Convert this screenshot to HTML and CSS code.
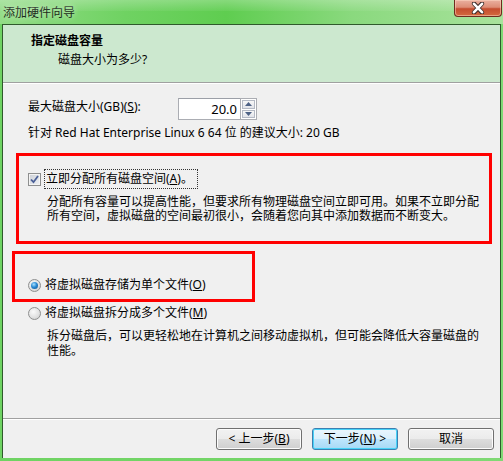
FILE: index.html
```html
<!DOCTYPE html>
<html lang="zh-CN">
<head>
<meta charset="utf-8">
<title>添加硬件向导</title>
<link rel="stylesheet" href="styles.css">
</head>
<body>
<div class="frame">
  <div class="titlebar">
    <span class="title">添加硬件向导</span>
    <div class="close"><svg width="20" height="12" viewBox="0 0 20 12"><path d="M6 1.5 L14 10.5 M14 1.5 L6 10.5" stroke="#3a2a28" stroke-width="4.2" fill="none" stroke-linecap="round"/><path d="M6 1.8 L14 10.2 M14 1.8 L6 10.2" stroke="#ffffff" stroke-width="2.6" fill="none" stroke-linecap="round"/></svg></div>
  </div>
  <div class="client">
    <div class="header">
      <div class="h-title">指定磁盘容量</div>
      <div class="h-sub">磁盘大小为多少?</div>
    </div>
    <div class="content">
      <div class="size-row">
        <span class="size-label">最大磁盘大小(GB)(<u>S</u>):</span>
        <div class="spin">
          <div class="spin-input">20.0</div>
          <div class="spin-btns">
            <div class="spin-btn"><svg width="7" height="4" viewBox="0 0 7 4"><path d="M0 4 L3.5 0 L7 4 Z" fill="#4d6185"/></svg></div>
            <div class="spin-btn"><svg width="7" height="4" viewBox="0 0 7 4"><path d="M0 0 L3.5 4 L7 0 Z" fill="#4d6185"/></svg></div>
          </div>
        </div>
      </div>
      <div class="hint">针对 Red Hat Enterprise Linux 6 64 位 的建议大小: 20 GB</div>
      <div class="opt opt-check">
        <span class="checkbox"><svg width="9" height="9" viewBox="0 0 9 9"><path d="M1 4.5 L3.5 7.2 L8 1" stroke="#4a5f97" stroke-width="1.8" fill="none"/></svg></span>
        <span class="focus-label">立即分配所有磁盘空间(<u>A</u>)。</span>
      </div>
      <div class="desc desc1">
        <div class="line">分配所有容量可以提高性能，但要求所有物理磁盘空间立即可用。如果不立即分配</div>
        <div class="line">所有空间，虚拟磁盘的空间最初很小，会随着您向其中添加数据而不断变大。</div>
      </div>
      <div class="opt opt-r1">
        <span class="radio checked"><span class="dot"></span></span>
        <span class="label">将虚拟磁盘存储为单个文件(<u>O</u>)</span>
      </div>
      <div class="opt opt-r2">
        <span class="radio"></span>
        <span class="label">将虚拟磁盘拆分成多个文件(<u>M</u>)</span>
      </div>
      <div class="desc desc2">
        <div class="line">拆分磁盘后，可以更轻松地在计算机之间移动虚拟机，但可能会降低大容量磁盘的</div>
        <div class="line">性能。</div>
      </div>
    </div>
    <div class="footer">
      <button class="btn">&lt; 上一步(<u>B</u>)</button>
      <button class="btn btn-default">下一步(<u>N</u>) &gt;</button>
      <button class="btn">取消</button>
    </div>
  </div>
</div>
<div class="mark mark1"></div>
<div class="mark mark2"></div>
</body>
</html>
```
FILE: styles.css
```css
* { box-sizing: border-box; }
html, body { margin: 0; padding: 0; }
body {
  width: 503px;
  height: 461px;
  overflow: hidden;
  position: relative;
  font-family: "Segoe UI", "Noto Sans", "Noto Sans CJK SC", sans-serif;
  font-size: 12px;
  color: #000;
}
u { text-decoration: underline; text-underline-offset: 1px; }
.frame {
  width: 503px;
  height: 461px;
  background: linear-gradient(90deg, #6fd363 0%, #74d568 50%, #80d975 100%);
  display: flex;
  flex-direction: column;
}
.titlebar {
  height: 24px;
  position: relative;
  background: linear-gradient(90deg, #92dc86 0%, #6fd262 25%, #5fcd50 45%, #8ad97e 70%, #a8e29c 100%);
  display: flex;
  align-items: center;
}
.titlebar::after {
  content: "";
  position: absolute;
  left: 0; right: 0; top: 0; height: 11px;
  background: linear-gradient(to bottom, rgba(255,255,255,0.25), rgba(255,255,255,0.05));
  pointer-events: none;
}
.title {
  margin-left: 3px;
  margin-top: 2px;
  line-height: 16px;
  color: #1c2c1a;
  text-shadow: 0 0 6px rgba(255,255,255,0.7);
}
.close {
  position: absolute;
  left: 454px;
  top: 0;
  width: 48px;
  height: 17px;
  border: 1px solid #6e2b1e;
  border-top: none;
  border-radius: 0 0 4px 4px;
  background: linear-gradient(to bottom, #eab0a0 0%, #dd8d76 45%, #c54d2f 55%, #d36a3e 100%);
  box-shadow: inset 0 0 0 1px rgba(255,220,200,0.5);
  display: flex;
  align-items: center;
  justify-content: center;
  z-index: 2;
}
.client {
  margin: 0 2px 3px 2px;
  flex: 1;
  border: 1px solid #2f5a2c;
  border-bottom: none;
  background: #f0f0f0;
  display: flex;
  flex-direction: column;
}
.header {
  height: 58px;
  background: #cce8cf;
  border-bottom: 1px solid #a0a0a0;
  box-shadow: 0 1px 0 #ffffff;
  margin-bottom: 1px;
  padding: 8px 0 0 28px;
}
.h-title {
  font-weight: bold;
  line-height: 16px;
}
.h-sub {
  margin-top: 3px;
  margin-left: 27px;
  line-height: 16px;
}
.content {
  flex: 1;
  padding: 0 0 0 25px;
}
.size-row {
  margin-top: 14px;
  height: 22px;
  display: flex;
  align-items: flex-start;
}
.size-label {
  line-height: 16px;
  margin-top: 1px;
  width: 150px;
}
.spin {
  display: flex;
  height: 22px;
}
.spin-input {
  width: 62px;
  height: 22px;
  background: #fff;
  border: 1px solid #abadb3;
  border-top-color: #9b9fa7;
  border-right: none;
  text-align: right;
  padding: 0 3px 0 0;
  line-height: 20px;
  font-size: 13px;
}
.spin-btns {
  width: 17px;
  height: 22px;
  display: flex;
  flex-direction: column;
  border: 1px solid #abadb3;
  background: #fff;
  padding: 1px;
  gap: 1px;
}
.spin-btn {
  flex: 1;
  border: 1px solid #b4b9c4;
  background: linear-gradient(to bottom, #f7f7f7, #e2e4ea);
  display: flex;
  align-items: center;
  justify-content: center;
}
.hint {
  margin-top: 5px;
  line-height: 16px;
}
.opt {
  display: flex;
  align-items: center;
  height: 20px;
}
.opt-check { margin-top: 28px; }
.checkbox {
  width: 13px;
  height: 13px;
  border: 1px solid #8e8f8f;
  background: linear-gradient(135deg, #cbcfd5 0%, #f0f2f5 100%);
  box-shadow: inset 0 0 0 1px #f4f4f4;
  display: flex;
  align-items: center;
  justify-content: center;
  margin-right: 3px;
}
.focus-label {
  border: 1px dotted #333;
  padding: 1px 4px 1px 1px;
  line-height: 16px;
}
.desc {
  padding-left: 19px;
  white-space: nowrap;
}
.desc .line {
  height: 15px;
  line-height: 15px;
}
.desc1 { margin-top: 6px; }
.desc1 .line { height: 14px; line-height: 14px; }
.opt-r1 { margin-top: 52px; }
.opt-r2 { margin-top: 8px; }
.desc2 { margin-top: 5px; }
.radio {
  width: 13px;
  height: 13px;
  border-radius: 50%;
  border: 1px solid #8e8f8f;
  background: radial-gradient(circle at 40% 35%, #fafafa 0%, #e2e2e2 55%, #c8c8c8 100%);
  display: flex;
  align-items: center;
  justify-content: center;
  margin-right: 4px;
}
.radio .dot {
  width: 7px;
  height: 7px;
  border-radius: 50%;
  background: radial-gradient(circle at 40% 35%, #a9e2ff 0%, #2a8ad4 45%, #0b4f8a 100%);
}
.label { line-height: 16px; }
.footer {
  height: 40px;
  border-top: 1px solid #a0a0a0;
  box-shadow: inset 0 1px 0 #ffffff;
  display: flex;
  justify-content: flex-end;
  align-items: flex-start;
  gap: 10px;
  padding: 9px 6px 0 0;
}
.btn {
  width: 86px;
  height: 22px;
  font-family: inherit;
  font-size: 12px;
  color: #000;
  border: 1px solid #707070;
  border-radius: 3px;
  background: linear-gradient(to bottom, #f2f2f2 0%, #ebebeb 50%, #dddddd 51%, #cfcfcf 100%);
  box-shadow: inset 0 0 0 1px #fcfcfc;
  padding: 0;
  line-height: 18px;
}
.btn-default {
  border-color: #3c7fb1;
  background: linear-gradient(to bottom, #eaf6fd 0%, #d9f0fc 50%, #bee6fd 51%, #a7d9f5 100%);
  box-shadow: inset 0 0 0 1px #48d3f8;
}
.mark {
  position: absolute;
  border: 3px solid #ff0000;
}
.mark1 { left: 16px; top: 153px; width: 476px; height: 91px; }
.mark2 { left: 12px; top: 251px; width: 243px; height: 51px; }
```
